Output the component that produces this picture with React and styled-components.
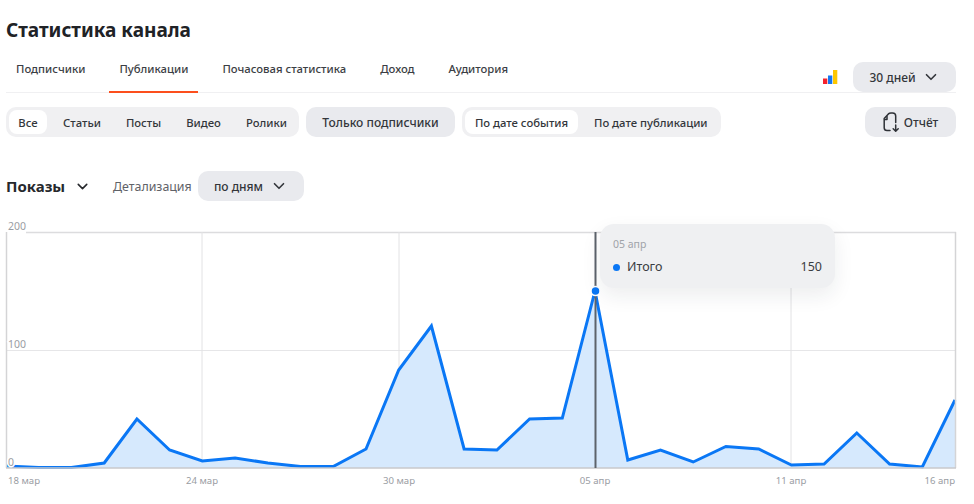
import React from "react";
import styled, { createGlobalStyle } from "styled-components";
import { ChevronDown } from "lucide-react";

const GlobalStyle = createGlobalStyle`
    body {
        margin: 0;
        background: #fff;
        font-family: "Noto Sans", "Open Sans", sans-serif;
        color: #26282c;
    }
`;

const values = [
    466, 467.5, 467.5, 463, 419, 450, 461, 458, 463, 466.5, 466.5, 449, 370, 326, 449, 450,
    419, 418, 291, 460, 450, 462, 446.5, 449, 465, 464, 433, 464, 467, 400,
];
const STEP = 949 / 29;
const points = values.map((y, i) => `${(6 + i * STEP).toFixed(1)},${y}`).join(" ");

const xLabels = [
    { x: 8, text: "18 мар", anchor: "start" },
    { x: 202, text: "24 мар", anchor: "middle" },
    { x: 399, text: "30 мар", anchor: "middle" },
    { x: 595, text: "05 апр", anchor: "middle" },
    { x: 791, text: "11 апр", anchor: "middle" },
    { x: 955, text: "16 апр", anchor: "end" },
];

const Page = styled.div`
    width: 974px;
    height: 504px;
    box-sizing: border-box;
    padding: 0 18px 0 6px;
    overflow: hidden;
`;

const Title = styled.h1`
    margin: 0;
    padding-top: 17px;
    height: 33px;
    font-size: 19px;
    line-height: 26px;
    font-weight: 700;
    color: #202226;
`;

const TabsRow = styled.div`
    display: flex;
    align-items: flex-end;
    justify-content: space-between;
    height: 42px;
    border-bottom: 1px solid #f0f0f2;
`;

const Tabs = styled.div`
    display: flex;
    gap: 14px;
`;

const Tab = styled.div`
    padding: 0 10px;
    height: 32px;
    box-sizing: border-box;
    font-size: 11.3px;
    line-height: 15px;
    font-weight: 500;
    color: #3b3e44;
    margin-bottom: -1px;
    border-bottom: ${(p) => (p.$active ? "2px solid #fc4f1d" : "2px solid transparent")};
`;

const Period = styled.div`
    display: flex;
    align-items: center;
    gap: 15px;
`;

const GreyButton = styled.div`
    display: flex;
    align-items: center;
    justify-content: center;
    height: 30px;
    box-sizing: border-box;
    border-radius: 10px;
    background: #e9eaee;
    font-size: 12px;
    font-weight: 500;
    color: #33363b;
    width: ${(p) => p.$width}px;
    gap: ${(p) => p.$gap || 0}px;
`;

const FilterRow = styled.div`
    display: flex;
    gap: 7px;
    margin-top: 14px;
`;

const Segment = styled.div`
    display: flex;
    height: 30px;
    box-sizing: border-box;
    padding: 3px;
    border-radius: 10px;
    background: #f0f0f2;
`;

const SegmentItem = styled.div`
    display: flex;
    align-items: center;
    justify-content: ${(p) => (p.$indent ? "flex-start" : "center")};
    box-sizing: border-box;
    width: ${(p) => p.$width}px;
    padding-left: ${(p) => p.$indent || 0}px;
    border-radius: 8px;
    font-size: 11.3px;
    font-weight: 500;
    color: #33363b;
    background: ${(p) => (p.$active ? "#fff" : "transparent")};
`;

const ReportButton = styled(GreyButton)`
    margin-left: auto;
`;

const MetricRow = styled.div`
    display: flex;
    align-items: center;
    height: 30px;
    margin-top: 34px;
`;

const Metric = styled.div`
    display: flex;
    align-items: center;
    gap: 9px;
    width: 107px;
    font-size: 15px;
    font-weight: 700;
    color: #26282c;
`;

const DetailLabel = styled.div`
    width: 85px;
    font-size: 12.4px;
    color: #5f6268;
`;

const ChartWrap = styled.div`
    position: relative;
    margin: 0 -18px 0 -6px;
    height: 303px;
`;

const Chart = styled.svg`
    display: block;
`;

const AxisText = styled.text`
    font-size: 9.6px;
    fill: #9a9da3;
`;

const ValueText = styled(AxisText)`
    font-size: 10.5px;
    stroke: #fff;
    stroke-width: 3px;
    paint-order: stroke;
`;

const Tooltip = styled.div`
    position: absolute;
    left: 600px;
    top: 23px;
    width: 235px;
    height: 64px;
    box-sizing: border-box;
    padding: 13px 13px 0;
    border-radius: 14px;
    background: #eff0f2;
    box-shadow: 0 8px 20px rgba(30, 35, 50, 0.08);
`;

const TooltipDate = styled.div`
    font-size: 10.5px;
    line-height: 14px;
    color: #a0a3a9;
`;

const TooltipRow = styled.div`
    display: flex;
    align-items: center;
    margin-top: 8px;
    font-size: 12.5px;
    line-height: 16px;
    color: #3a3d42;
`;

const Dot = styled.span`
    width: 7px;
    height: 7px;
    border-radius: 50%;
    background: #0a77f5;
    margin-right: 7px;
`;

const TooltipValue = styled.span`
    margin-left: auto;
`;

const BarsLogo = () => (
    <svg width="15" height="14" viewBox="0 0 15 14">
        <rect x="0" y="8.5" width="4.3" height="5.5" fill="#f5222d" />
        <rect x="5" y="5.5" width="4.3" height="8.5" fill="#1677f0" />
        <rect x="10" y="0" width="4.3" height="14" fill="#fdc700" />
    </svg>
);

const ReportIcon = () => (
    <svg width="16" height="20" viewBox="0 0 16 20" fill="none" stroke="#2e3136" strokeWidth="1.5" strokeLinecap="round" strokeLinejoin="round">
        <path d="M7 18.5H4C2.4 18.5 1.2 17.3 1.2 15.7V6.4L5.4 1.9C6.1 1.2 6.9 0.9 8 0.9H9.6C11.4 0.9 12.7 2.2 12.7 4V10.5" />
        <path d="M4 4.6V7.6H1.6" />
        <path d="M12.7 13V19M10.2 16.7L12.7 19.2L15.2 16.7" />
    </svg>
);

const StatsChart = () => (
    <Chart width="974" height="303" viewBox="0 201 974 303">
        <line x1="26" y1="232.5" x2="956" y2="232.5" stroke="#dcdcde" strokeWidth="1.5" />
        <line x1="6" y1="350.5" x2="956" y2="350.5" stroke="#e6e6e8" />
        {[202, 399, 791].map((x) => (
            <line key={x} x1={x} y1="232" x2={x} y2="468" stroke="#e2e2e4" />
        ))}
        <polygon points={`6,468 ${points} 955,468`} fill="#d6e9fd" />
        <polyline points={points} fill="none" stroke="#0a77f5" strokeWidth="3" strokeLinejoin="miter" />
        <line x1="6.5" y1="232" x2="6.5" y2="468" stroke="#d4d4d6" strokeWidth="1.5" />
        <line x1="955.5" y1="232" x2="955.5" y2="468" stroke="#d4d4d6" strokeWidth="1.5" />
        <line x1="6" y1="468" x2="956" y2="468" stroke="#c8c9cb" strokeWidth="1.5" />
        <line x1="595.5" y1="232" x2="595.5" y2="468" stroke="#5d636b" strokeWidth="2" />
        <circle cx="595.5" cy="291" r="4.5" fill="#0a77f5" stroke="#fff" strokeWidth="1.5" />
        <ValueText x="8" y="230">200</ValueText>
        <ValueText x="8" y="348">100</ValueText>
        <ValueText x="8" y="466">0</ValueText>
        {xLabels.map((l) => (
            <AxisText key={l.text} x={l.x} y="484" textAnchor={l.anchor}>
                {l.text}
            </AxisText>
        ))}
    </Chart>
);

class App extends React.Component {
    render() {
        return (
            <Page>
                <GlobalStyle />
                <Title>Статистика канала</Title>
                <TabsRow>
                    <Tabs>
                        <Tab>Подписчики</Tab>
                        <Tab $active>Публикации</Tab>
                        <Tab>Почасовая статистика</Tab>
                        <Tab>Доход</Tab>
                        <Tab>Аудитория</Tab>
                    </Tabs>
                    <Period>
                        <BarsLogo />
                        <GreyButton $width={103} $gap={6}>
                            30 дней <ChevronDown size={18} strokeWidth={2.2} />
                        </GreyButton>
                    </Period>
                </TabsRow>
                <FilterRow>
                    <Segment>
                        <SegmentItem $active $width={38}>Все</SegmentItem>
                        <SegmentItem $width={70}>Статьи</SegmentItem>
                        <SegmentItem $width={53}>Посты</SegmentItem>
                        <SegmentItem $width={67}>Видео</SegmentItem>
                        <SegmentItem $width={59}>Ролики</SegmentItem>
                    </Segment>
                    <GreyButton $width={149}>Только подписчики</GreyButton>
                    <Segment>
                        <SegmentItem $active $width={113}>По дате события</SegmentItem>
                        <SegmentItem $width={140} $indent={16}>По дате публикации</SegmentItem>
                    </Segment>
                    <ReportButton $width={91} $gap={5}>
                        <ReportIcon /> Отчёт
                    </ReportButton>
                </FilterRow>
                <MetricRow>
                    <Metric>
                        Показы <ChevronDown size={17} strokeWidth={2.2} />
                    </Metric>
                    <DetailLabel>Детализация</DetailLabel>
                    <GreyButton $width={106} $gap={7}>
                        по дням <ChevronDown size={18} strokeWidth={2.2} />
                    </GreyButton>
                </MetricRow>
                <ChartWrap>
                    <StatsChart />
                    <Tooltip>
                        <TooltipDate>05 апр</TooltipDate>
                        <TooltipRow>
                            <Dot />
                            Итого
                            <TooltipValue>150</TooltipValue>
                        </TooltipRow>
                    </Tooltip>
                </ChartWrap>
            </Page>
        );
    }
}

export default App;
